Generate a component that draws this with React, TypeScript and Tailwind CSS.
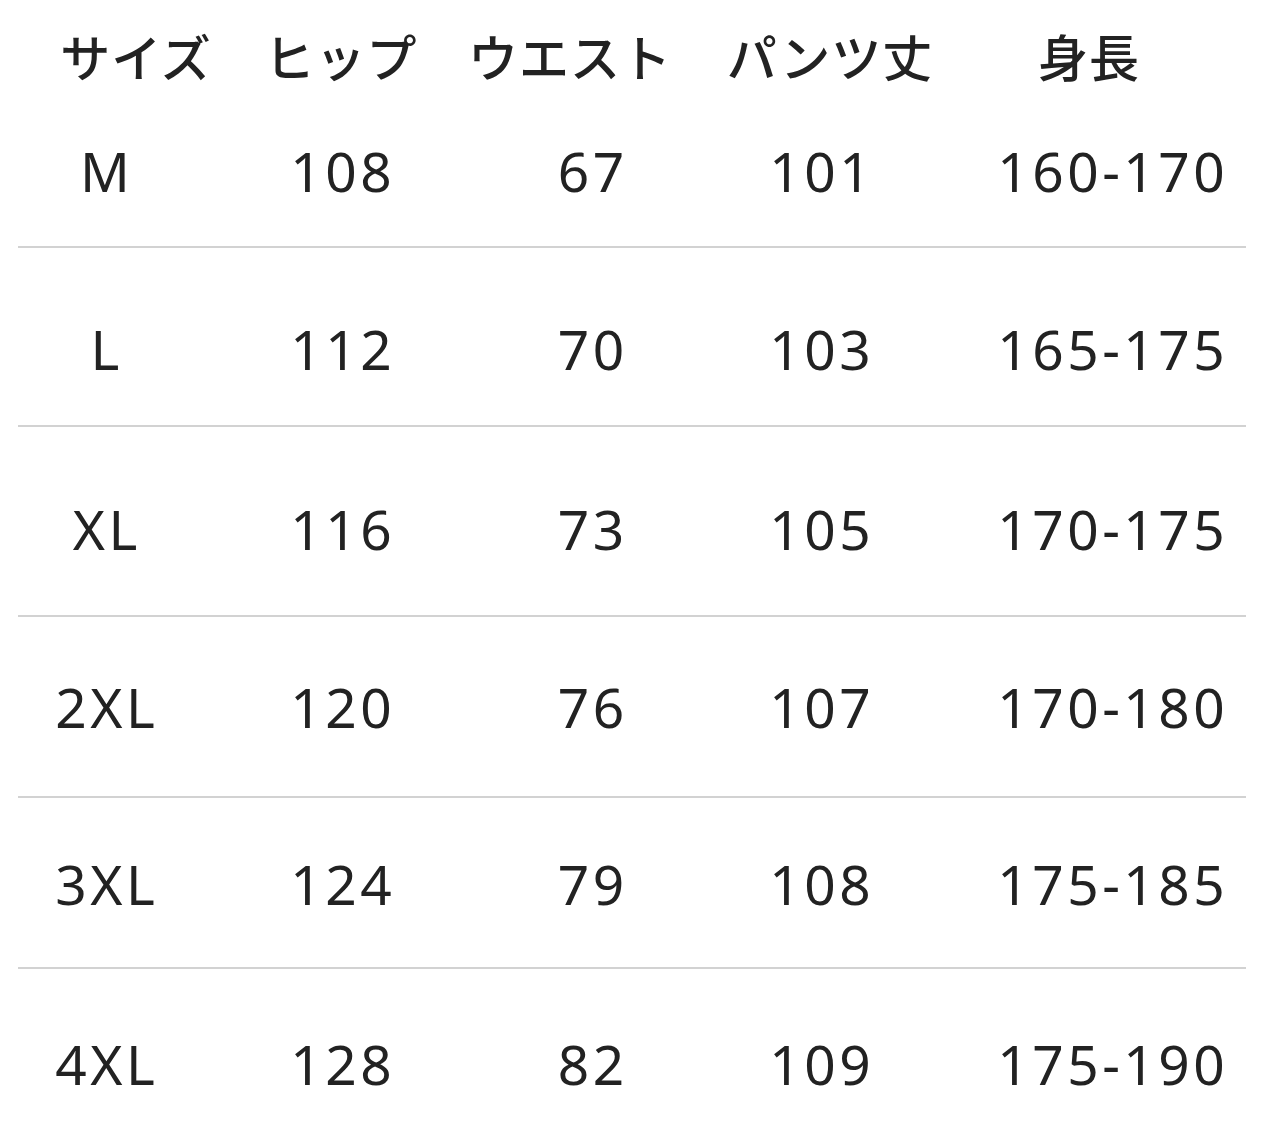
import React from "react";

const headers = ["サイズ", "ヒップ", "ウエスト", "パンツ丈", "身長"];

const rows = [
  { cells: ["M", "108", "67", "101", "160-170"], box: "h-[132px] pt-[28px]" },
  { cells: ["L", "112", "70", "103", "165-175"], box: "h-[177px] pt-[72px]" },
  { cells: ["XL", "116", "73", "105", "170-175"], box: "h-[188px] pt-[73px]" },
  { cells: ["2XL", "120", "76", "107", "170-180"], box: "h-[179px] pt-[61px]" },
  { cells: ["3XL", "124", "79", "108", "175-185"], box: "h-[169px] pt-[57px]" },
  { cells: ["4XL", "128", "82", "109", "175-190"], box: "h-[162px] pt-[66px]" },
];

const Divider = () => <div className="ml-[18px] h-[2px] w-[1228px] bg-[#d2d2d2]" />;

export default function App() {
  return (
    <div className="w-[1280px] h-[1131px] overflow-hidden bg-white text-[#222222]">
      {/* header row */}
      <div
        className="grid h-[114px] grid-cols-[272px_138px_320px_200px_318px] items-center pb-[4px] text-[50px] font-medium leading-none tracking-[1px]"
        style={{ fontFamily: '"Noto Sans CJK JP", "Noto Sans", sans-serif' }}
      >
        {headers.map((h) => (
          <div key={h} className="flex justify-center whitespace-nowrap">
            {h}
          </div>
        ))}
      </div>

      {rows.map((row, i) => (
        <React.Fragment key={row.cells[0]}>
          <div className={row.box}>
            <div
              className="grid h-[56px] grid-cols-[210px_262px_238px_220px_362px] items-center text-[55px] leading-none tracking-[3.5px]"
              style={{ fontFamily: '"Noto Sans", "Open Sans", sans-serif' }}
            >
              {row.cells.map((c, j) => (
                <div key={j} className="flex justify-center whitespace-nowrap pl-[3.5px]">
                  {c}
                </div>
              ))}
            </div>
          </div>
          {i < rows.length - 1 && <Divider />}
        </React.Fragment>
      ))}
    </div>
  );
}
